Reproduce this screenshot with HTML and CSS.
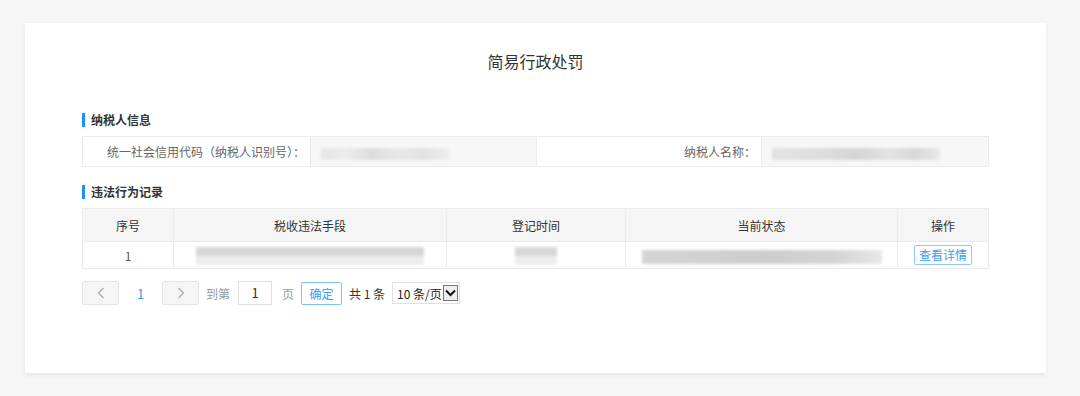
FILE: index.html
```html
<!DOCTYPE html>
<html lang="zh-CN">
<head>
    <meta charset="UTF-8">
    <title>简易行政处罚</title>
    <link rel="stylesheet" href="styles.css">
</head>
<body>
    <div class="card">
        <h2 class="title">简易行政处罚</h2>

        <!-- 纳税人信息 -->
        <div class="section-title">纳税人信息</div>
        <table class="info">
            <tr>
                <td class="label l1">统一社会信用代码（纳税人识别号）：</td>
                <td class="value v1"><span class="blur b-id"></span></td>
                <td class="label l2">纳税人名称：</td>
                <td class="value v2"><span class="blur b-name"></span></td>
            </tr>
        </table>

        <!-- 违法行为记录 -->
        <div class="section-title">违法行为记录</div>
        <table class="record">
            <tr>
                <th class="c1">序号</th>
                <th class="c2">税收违法手段</th>
                <th class="c3">登记时间</th>
                <th class="c4">当前状态</th>
                <th class="c5">操作</th>
            </tr>
            <tr>
                <td>1</td>
                <td><span class="blur b-means"></span></td>
                <td><span class="blur b-time"></span></td>
                <td><span class="blur b-state"></span></td>
                <td><button class="detail">查看详情</button></td>
            </tr>
        </table>

        <!-- 分页 -->
        <div class="pager">
            <span class="pg-btn"><svg width="8" height="12" viewBox="0 0 8 12"><path d="M6.5 1 L1.5 6 L6.5 11" fill="none" stroke="#aaa" stroke-width="1.2"/></svg></span>
            <span class="pg-num">1</span>
            <span class="pg-btn"><svg width="8" height="12" viewBox="0 0 8 12"><path d="M1.5 1 L6.5 6 L1.5 11" fill="none" stroke="#aaa" stroke-width="1.2"/></svg></span>
            <span class="pg-text go">到第</span>
            <span class="pg-input">1</span>
            <span class="pg-text page">页</span>
            <span class="pg-ok">确定</span>
            <span class="pg-total">共 1 条</span>
            <span class="pg-select">10 条/页<span class="arrow"><svg width="11" height="8" viewBox="0 0 11 8"><path d="M1 1.5 L5.5 6 L10 1.5" fill="none" stroke="#111" stroke-width="2"/></svg></span></span>
        </div>
    </div>
</body>
</html>
```

FILE: styles.css
```css
* {
    margin: 0;
    padding: 0;
    box-sizing: border-box;
}

body {
    font-family: "Noto Sans CJK SC", "Liberation Sans", sans-serif;
    background-color: #f6f6f6;
    color: #333;
    font-size: 12px;
    padding: 23px 34px 23px 25px;
}

/* 主卡片 */
.card {
    background-color: #fff;
    height: 350px;
    padding: 0 57px;
    box-shadow: 0 2px 4px rgba(0, 0, 0, 0.08);
}

.title {
    font-size: 16px;
    font-weight: normal;
    text-align: center;
    color: #333;
    padding-top: 26px;
    line-height: 24px;
    height: 90px;
}

.section-title {
    font-weight: bold;
    font-size: 12px;
    line-height: 14px;
    border-left: 3px solid #1e90ff;
    padding-left: 6px;
    margin-bottom: 9px;
    color: #333;
}

table {
    width: 100%;
    border-collapse: collapse;
}

td, th {
    border: 1px solid #ebebeb;
}

/* 纳税人信息 */
.info {
    margin-bottom: 18px;
}

.info td {
    height: 30px;
}

.info .label {
    color: #666;
    text-align: right;
    padding-right: 5px;
}

.info .value {
    background-color: #f7f7f7;
    padding-left: 10px;
}

.l1 { width: 228px; }
.v1 { width: 226px; }
.l2 { width: 225px; }

.blur {
    display: inline-block;
    vertical-align: middle;
    height: 12px;
    filter: blur(1.5px);
}

.b-id {
    width: 128px;
    background: linear-gradient(90deg, #e6e6e6, #ececec 20%, #dcdcdc 40%, #e8e8e8 60%, #e2e2e2 80%, #eeeeee);
}

.b-name {
    width: 168px;
    background: linear-gradient(90deg, #e2e2e2, #dddddd 30%, #d4d4d4 50%, #e2e2e2 70%, #d8d8d8 85%, #e8e8e8);
}

/* 违法行为记录 */
.record th {
    background-color: #f5f5f5;
    font-weight: normal;
    height: 33px;
    color: #333;
}

.record td {
    height: 27px;
    text-align: center;
    color: #555;
}

.c1 { width: 91px; }
.c2 { width: 273px; }
.c3 { width: 179px; }
.c4 { width: 272px; }

.b-means {
    width: 228px;
    height: 18px;
    background: linear-gradient(180deg, #d6d6d6 0, #d6d6d6 50%, #ececec 50%);
}

.b-time {
    width: 42px;
    height: 18px;
    background: linear-gradient(180deg, #d8d8d8 0, #d8d8d8 50%, #ececec 50%);
}

.b-state {
    width: 240px;
    height: 14px;
    background: linear-gradient(90deg, #d4d4d4, #d0d0d0 30%, #cccccc 50%, #d4d4d4 80%, #e6e6e6);
}

.detail {
    font-family: inherit;
    font-size: 12px;
    color: #3a9cf0;
    background: #fff;
    border: 1px solid #8ec9f7;
    border-radius: 2px;
    width: 58px;
    height: 20px;
    line-height: 18px;
}

/* 分页 */
.pager {
    display: flex;
    align-items: center;
    margin-top: 12px;
    height: 24px;
    color: #999;
}

.pg-btn {
    width: 37px;
    height: 24px;
    background-color: #f5f5f5;
    border: 1px solid #e4e4e4;
    border-radius: 2px;
    display: flex;
    align-items: center;
    justify-content: center;
}

.pg-num {
    color: #3a9cf0;
    width: 43px;
    text-align: center;
    font-size: 13px;
}

.pg-text.go {
    margin-left: 7px;
}

.pg-text.page {
    margin-left: 10px;
}

.pg-input {
    width: 34px;
    height: 24px;
    border: 1px solid #e0e0e0;
    margin-left: 8px;
    text-align: center;
    line-height: 22px;
    font-size: 13px;
    color: #333;
}

.pg-ok {
    margin-left: 7px;
    width: 41px;
    height: 23px;
    border: 1px solid #7fc0f5;
    border-radius: 2px;
    text-align: center;
    line-height: 21px;
    color: #3a9cf0;
}

.pg-total {
    margin-left: 7px;
    color: #333;
}

.pg-select {
    margin-left: 7px;
    height: 22px;
    border: 1px solid #e0e0e0;
    display: flex;
    align-items: center;
    padding-left: 4px;
    color: #222;
}

.arrow {
    width: 15px;
    height: 16px;
    border: 1px solid #777;
    background: #eee;
    display: flex;
    align-items: center;
    justify-content: center;
    margin-left: 1px;
    margin-right: 1px;
}
```
